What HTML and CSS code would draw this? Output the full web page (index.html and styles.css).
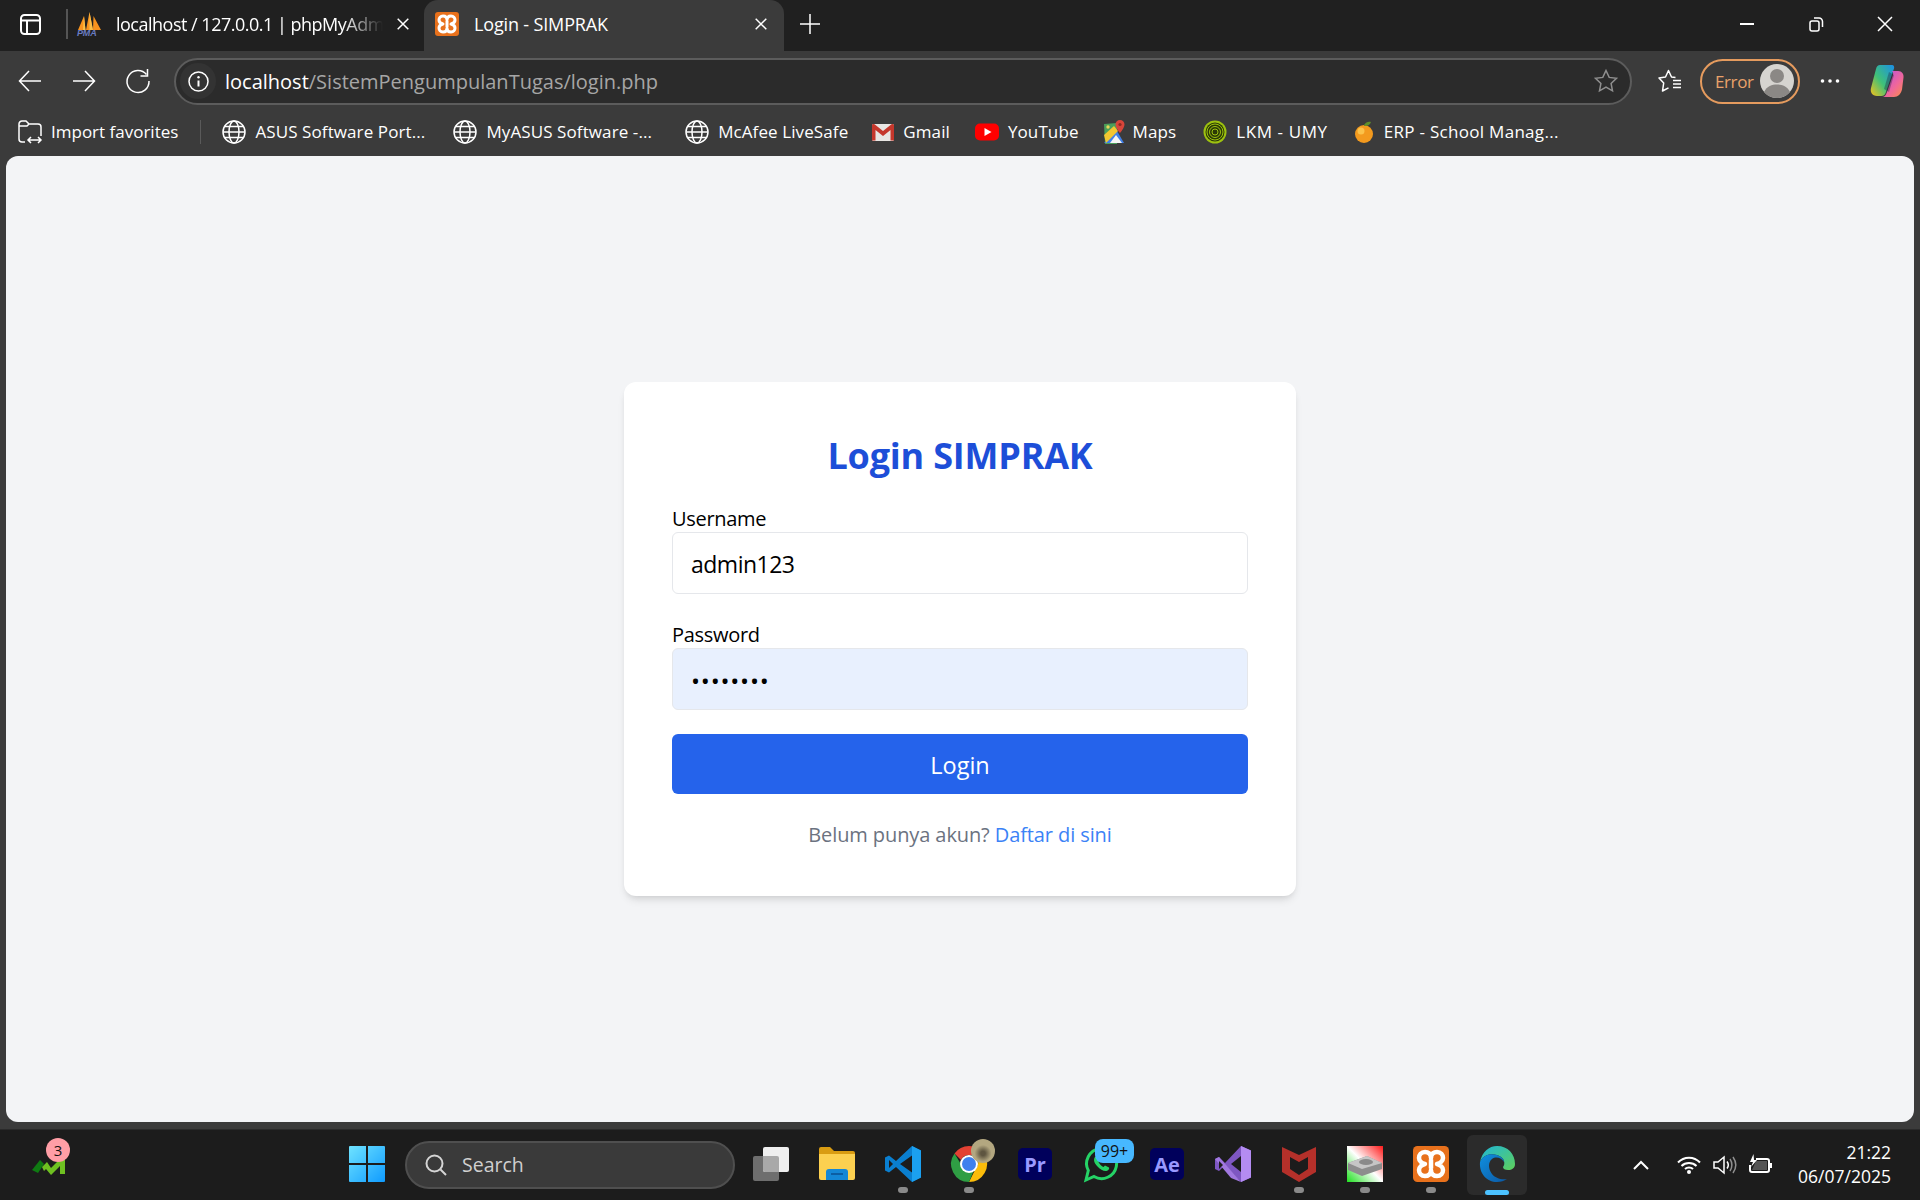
FILE: index.html
```html
<!DOCTYPE html>
<html lang="id">
<head>
<meta charset="utf-8">
<title>Login - SIMPRAK</title>
<link rel="stylesheet" href="styles.css">
</head>
<body>
<svg class="defs" aria-hidden="true">
  <symbol id="globe" viewBox="0 0 24 24"><circle cx="12" cy="12" r="11" class="ln"/><ellipse cx="12" cy="12" rx="5" ry="11" class="ln"/><path d="M1 12h22M2.500 6.500h19M2.500 17.500h19" class="ln"/></symbol>
  <symbol id="xampp" viewBox="0 0 24 24"><rect width="24" height="24" rx="3" fill="#e8711c"/><path d="M12 8C12 5 10 4 8 4 5.500 4 4 6 4 8c0 2 2 3.500 4 4-2 .5-4 2-4 4 0 2 1.500 4 4 4 2 0 4-1 4-4 0 3 2 4 4 4 2.500 0 4-2 4-4 0-2-2-3.500-4-4 2-.5 4-2 4-4 0-2-1.500-4-4-4-2 0-4 1-4 4zM12 9v6" fill="none" stroke="#fff" stroke-width="3" stroke-linejoin="round"/></symbol>
</svg>
<div class="titlebar">
  <svg class="i21 tb-layout" viewBox="0 0 21 21"><rect x="1" y="1" width="19" height="19" rx="3.500" class="ln ln2"/><path d="M1 6.500h19M7 6.500V20" class="ln ln2"/></svg>
  <div class="tab-sep"></div>
  <div class="tab tab-idle">
    <svg class="i24" viewBox="0 0 24 24"><path d="M1 18 7 4l1.500 14zM9 18 12.500 0 16 18zM16 18l.5-14L24 18z" fill="#f7931e"/><path d="M12.500 0 16 18h-3.500zM7 4l1.500 14H6z" fill="#f9c04a"/><text x="0" y="24" class="pma">PMA</text></svg>
    <span class="tab-name fade">localhost / 127.0.0.1 | phpMyAdm</span>
    <svg class="i12" viewBox="0 0 12 12"><path d="M.7.7l10.600 10.600M11.300.7.700 11.300" class="ln"/></svg>
  </div>
  <div class="tab tab-active">
    <svg class="i24" viewBox="0 0 24 24"><use href="#xampp"/></svg>
    <span class="tab-name">Login - SIMPRAK</span>
    <svg class="i12" viewBox="0 0 12 12"><path d="M.7.7l10.600 10.600M11.300.7.700 11.300" class="ln"/></svg>
  </div>
  <svg class="i20 tb-plus" viewBox="0 0 20 20"><path d="M10 0v20M0 10h20" class="ln"/></svg>
  <div class="win-controls">
    <svg class="i16" viewBox="0 0 16 16"><path d="M1 8h14" class="ln ln2"/></svg>
    <svg class="i16" viewBox="0 0 16 16"><rect x="2" y="5" width="9" height="10" rx="2" class="ln"/><path d="M6 2h5a3.500 3.500 0 0 1 3.500 3.500V11" class="ln"/></svg>
    <svg class="i16" viewBox="0 0 16 16"><path d="M1 1l14 14M15 1 1 15" class="ln"/></svg>
  </div>
</div>

<div class="toolbar">
  <svg class="i24 nav" viewBox="0 0 24 24"><path d="M23 12H1.500M11 2 1.500 12 11 22" class="ln"/></svg>
  <svg class="i24 nav" viewBox="0 0 24 24"><path d="M1 12h21.500M13 2l9.500 10L13 22" class="ln"/></svg>
  <svg class="i24 nav" viewBox="0 0 24 24"><path d="M20.500 5.500A11 11 0 1 0 23 12" class="ln"/><path d="M21.500 0v7h-7" class="ln"/></svg>
  <div class="address">
    <span class="info"><svg class="i21" viewBox="0 0 21 21"><circle cx="10.500" cy="10.500" r="9.500" class="ln"/><path d="M10.500 9.500v6" class="ln ln2"/><circle cx="10.500" cy="6.300" r="1.200" fill="#fff"/></svg></span>
    <span class="url"><b class="host">localhost</b>/SistemPengumpulanTugas/login.php</span>
    <svg class="i24 addr-star" viewBox="0 0 24 24"><path d="M12 1.500l3.200 6.900 7.300.9-5.400 5.100 1.400 7.400L12 18.200l-6.500 3.600 1.400-7.400L1.500 9.300l7.300-.9z" class="ln dim"/></svg>
  </div>
  <svg class="i24 fav" viewBox="0 0 24 24"><path d="M17.500 8.500 13.500 8 10.500 1.500 7.500 8 1 9 5.700 14 4.500 22l6-3.200" class="ln" stroke-linejoin="round"/><path d="M15 11.500h8M15 15h8M15 18.500h8" class="ln"/></svg>
  <div class="profile">
    <span class="err">Error</span>
    <svg class="avatar" viewBox="0 0 34 34"><circle cx="17" cy="17" r="17" fill="#d6d4d0"/><circle cx="17" cy="12" r="7" fill="#8b8885"/><path d="M4 28c3-6 8-7.500 13-7.500S27 22 30 28a17 17 0 0 1-26 0z" fill="#8b8885"/></svg>
  </div>
  <svg class="dots" viewBox="0 0 20 4"><circle cx="2.500" cy="2" r="1.800" fill="#fff"/><circle cx="10" cy="2" r="1.800" fill="#fff"/><circle cx="17.500" cy="2" r="1.800" fill="#fff"/></svg>
  <svg class="copilot" viewBox="0 0 34 34">
    <defs>
      <linearGradient id="cpa" x1="0" y1="1" x2="1" y2="0"><stop offset="0" stop-color="#f5c21b"/><stop offset=".45" stop-color="#3fc178"/><stop offset="1" stop-color="#1b8fe8"/></linearGradient>
      <linearGradient id="cpb" x1="0" y1="0" x2="1" y2="1"><stop offset="0" stop-color="#b04fe6"/><stop offset=".6" stop-color="#f0679a"/><stop offset="1" stop-color="#fb8f46"/></linearGradient>
    </defs>
    <path d="M10 1h12c2 0 2.500 2 2 3.500L16 28c-1 3-2.500 4-4.500 4H7C2 32 0 28 1 24L6 5c.6-2.500 2-4 4-4z" fill="url(#cpa)"/>
    <path d="M21 7h7c4 0 6 3 5.500 6.500l-1.500 12C31 30 28 33 24 33H12c2.500 0 4-2 5-5l6-17c.5-2 0-4-2-4z" fill="url(#cpb)"/>
    <path d="M19 8l-5 17 5 3 5-17z" fill="#1d1d3a" opacity=".35"/>
  </svg>
</div>

<div class="bookmarks">
  <div class="bm bm-import">
    <svg class="i24" viewBox="0 0 24 24"><path d="M7 22H4a3 3 0 0 1-3-3V4a3 3 0 0 1 3-3h4l3 3h9a3 3 0 0 1 3 3v9M1 6h8l2-2" class="ln"/><path d="M10 20h13M13 17l-3 3 3 3M20 17l3 3-3 3" class="ln"/></svg>
    <span>Import favorites</span>
  </div>
  <div class="bm-sep"></div>
  <div class="bm bm-asus"><svg class="i24" viewBox="0 0 24 24"><use href="#globe"/></svg><span>ASUS Software Port...</span></div>
  <div class="bm bm-myasus"><svg class="i24" viewBox="0 0 24 24"><use href="#globe"/></svg><span>MyASUS Software -...</span></div>
  <div class="bm bm-mcafee"><svg class="i24" viewBox="0 0 24 24"><use href="#globe"/></svg><span>McAfee LiveSafe</span></div>
  <div class="bm"><svg class="i22" viewBox="0 0 22 22"><rect y="3" width="22" height="17" rx="1.500" fill="#e8e6e3"/><path d="M0 4.500v15h3.500V9l7.500 6 7.500-6v10.500H22v-15C22 3 20 2.500 18.500 4L11 10 3.500 4C2 2.500 0 3 0 4.500z" fill="#c5372c"/></svg><span>Gmail</span></div>
  <div class="bm"><svg class="i24" viewBox="0 0 24 24"><rect y="3.500" width="24" height="17" rx="5" fill="#f00"/><path d="M9.500 8v8l7-4z" fill="#fff"/></svg><span>YouTube</span></div>
  <div class="bm bm-maps"><svg class="i20x24" viewBox="0 0 20 24"><path d="M0 4l13-1v21H1z" fill="#4a9e5b"/><path d="M0 23 13 11l7 12z" fill="#3f7fe8"/><path d="M0 15 10 6l4 5L2 23z" fill="#f3c631"/><path d="M6 23l6-8 6 8z" fill="#f4f4f4"/><path d="M16 0a4.500 4.500 0 0 0-4.500 4.500C11.500 8 16 13 16 13s4.500-5 4.500-8.500A4.500 4.500 0 0 0 16 0z" fill="#d8453a"/><circle cx="16" cy="4.500" r="1.600" fill="#8e2a22"/><circle cx="4" cy="7" r="1.700" fill="#e8d65a"/></svg><span>Maps</span></div>
  <div class="bm bm-lkm"><svg class="i24" viewBox="0 0 24 24"><circle cx="12" cy="12" r="11.500" fill="#9dc10f"/><circle cx="12" cy="12" r="9.500" fill="#2b3a05"/><circle cx="12" cy="12" r="8" fill="none" stroke="#9dc10f" stroke-width="1"/><circle cx="12" cy="12" r="5.500" fill="none" stroke="#9dc10f" stroke-width="1"/><circle cx="12" cy="12" r="3" fill="none" stroke="#9dc10f" stroke-width="1"/></svg><span>LKM - UMY</span></div>
  <div class="bm bm-erp"><svg class="i22" viewBox="0 0 22 22"><circle cx="11" cy="13" r="9" fill="#f39a1e"/><circle cx="8" cy="10" r="3.500" fill="#fbc24a"/><path d="M11 4c2-3 4-3.500 7-3-1 3-3.500 4-7 4z" fill="#5f8f2a"/></svg><span>ERP - School Manag...</span></div>
</div>

<main class="content">
  <form class="card">
    <h1 class="card-title">Login SIMPRAK</h1>
    <div class="field">
      <label class="field-label" for="u">Username</label>
      <input class="field-input" id="u" type="text" value="admin123">
    </div>
    <div class="field">
      <label class="field-label" for="p">Password</label>
      <input class="field-input field-auto" id="p" type="password" value="admin123">
    </div>
    <button class="submit" type="button">Login</button>
    <p class="foot">Belum punya akun? <a class="foot-link" href="#">Daftar di sini</a></p>
  </form>
</main>
<div class="strip"></div>

<div class="taskbar">
  <div class="widget">
    <svg class="widget-ic" viewBox="0 0 34 18"><path d="M0 13 8 3l4 4-6 9z" fill="#0f7a12"/><path d="M10 10l5-5 4 6 8-8h6v14h-5V9l-9 9-5-6-2 2z" fill="#6fc021"/></svg>
    <span class="widget-badge">3</span>
  </div>
  <div class="task-center">
    <div class="slot start"><svg class="i36" viewBox="0 0 36 36"><defs><linearGradient id="wl" x1="0" y1="0" x2="1" y2="1"><stop offset="0" stop-color="#6fe3ff"/><stop offset="1" stop-color="#0f9bff"/></linearGradient></defs><path d="M1 0h16v17H0V1a1 1 0 0 1 1-1zM19 0h16a1 1 0 0 1 1 1v16H19zM0 19h17v17H1a1 1 0 0 1-1-1zM19 19h17v16a1 1 0 0 1-1 1H19z" fill="url(#wl)"/></svg></div>
    <div class="search">
      <svg class="i22" viewBox="0 0 22 22"><circle cx="9.500" cy="9.500" r="8" class="ln ln2 soft"/><path d="M15.500 15.500 21 21" class="ln ln2 soft"/></svg>
      <span>Search</span>
    </div>
    <div class="slot"><svg class="i36" viewBox="0 0 36 36"><rect y="10" width="26" height="25" rx="2" fill="#6e6e6e"/><rect x="10" y="1" width="26" height="25" rx="2" fill="#efefef"/><path d="M10 10h14a2 2 0 0 1 2 2v14H12a2 2 0 0 1-2-2z" fill="#a9a9a9"/></svg></div>
    <div class="slot"><svg class="i36" viewBox="0 0 36 36"><path d="M0 3a2 2 0 0 1 2-2h9l4 4h19a2 2 0 0 1 2 2v4H0z" fill="#d99c12"/><path d="M0 8h36v24a2 2 0 0 1-2 2H2a2 2 0 0 1-2-2z" fill="#fcd050"/><path d="M7 34v-8a3 3 0 0 1 3-3h16a3 3 0 0 1 3 3v8z" fill="#1487d6"/><path d="M12 27h12v2H12z" fill="#0c5ea3"/></svg></div>
    <div class="slot mark"><svg class="i36" viewBox="0 0 36 36"><path d="M27 0 11 15 4 9.500 0 11.500v13L4 26.500 11 21l16 15 9-4.500v-27zM27 9.500 15 18l12 8.500zM4 14v8l4-4z" fill="#0a7fd0" fill-rule="evenodd"/><path d="M27 0l9 4.500v27L27 36z" fill="#1ba0f0"/></svg></div>
    <div class="slot mark"><svg class="i36" viewBox="0 0 36 36"><path d="M18 0a18 18 0 0 1 15.600 9H18a9 9 0 0 0-8 5L3.500 7.500A18 18 0 0 1 18 0z" fill="#e34133"/><path d="M33.600 9A18 18 0 0 1 18 36l6.500-13A9 9 0 0 0 26 12z" fill="#fbbc0a"/><path d="M3.500 7.500 11 20a9 9 0 0 0 12 4l-5 12A18 18 0 0 1 3.500 7.500z" fill="#2f9e44"/><circle cx="18" cy="18" r="9" fill="#fff"/><circle cx="18" cy="18" r="7" fill="#3f80ee"/></svg><span class="chrome-avatar"></span></div>
    <div class="slot"><span class="adobe">Pr</span></div>
    <div class="slot"><svg class="i36" viewBox="0 0 36 36"><path d="M3 34l2.300-9.500A15 15 0 1 1 11 30.500z" fill="none" stroke="#25d366" stroke-width="3"/><path d="M12 11c-1.500 2-1.500 5 2 9s7 5.500 9.500 5 3-3 2.500-3.500l-4-2-1.500 1.500c-2-.5-4-3-5-5l1.500-1.500-1.500-4c-1-.5-2.500 0-3.500.5z" fill="#25d366"/></svg><span class="wa-badge">99+</span></div>
    <div class="slot"><span class="adobe">Ae</span></div>
    <div class="slot"><svg class="i36" viewBox="0 0 36 36"><path d="M26 0l10 4.500v27L26 36 10 19l-6 6-4-2V13l4-2 6 6z" fill="#7e57c2"/><path d="M26 0l10 4.500v27L26 36z" fill="#b48cf2"/><path d="M0 13l4-2 22 25-10-4z" fill="#a178e0"/><path d="M4 15v8l4-4z" fill="#1c1c1c"/><path d="M26 10 16 18l10 8z" fill="#1c1c1c"/></svg></div>
    <div class="slot mark"><svg class="i36" viewBox="0 0 36 36"><path d="M1 1l17 8 17-8v25L18 36 1 26z" fill="#b5302a"/><path d="M9 11l9 5 9-5v12l-9 6-9-6z" fill="#1c1c1c"/></svg></div>
    <div class="slot mark"><svg class="i36" viewBox="0 0 36 36"><defs><linearGradient id="dg" x1="0" y1="1" x2="1" y2="0"><stop offset="0" stop-color="#1fe01f"/><stop offset=".5" stop-color="#fff"/><stop offset="1" stop-color="#ff1a1a"/></linearGradient></defs><rect width="36" height="36" fill="url(#dg)"/><path d="M1 17 20 10l15 7v6L15 30 1 24z" fill="#8d8d8d"/><path d="M1 17 20 10l15 7-20 6z" fill="#c6c6c6"/><ellipse cx="19" cy="16" rx="7" ry="3" fill="#8a8a8a"/></svg></div>
    <div class="slot mark"><svg class="i36" viewBox="0 0 24 24"><use href="#xampp"/></svg></div>
    <div class="slot slot-edge"><svg class="i36" viewBox="0 0 36 36"><defs><linearGradient id="eg" x1="0" y1="0" x2="1" y2="1"><stop offset="0" stop-color="#1fb6d8"/><stop offset="1" stop-color="#5fd05a"/></linearGradient><linearGradient id="eb" x1="0" y1="0" x2="1" y2="1"><stop offset="0" stop-color="#0f8fdf"/><stop offset="1" stop-color="#0c59a4"/></linearGradient></defs><path d="M18 0C29 0 36 8 36 18c0 4-3 6-7 6-3 0-5-1-5-3 2-2 3-9-6-12-7-2-14 0-17 7C3 6 10 0 18 0z" fill="url(#eg)"/><path d="M1 16c3-7 10-9 17-7 5 1.500 7 4.500 7 7-2-4-8-6-12-3-4 3-4 10 0 15 3 4 9 6 15 5-3 2-6 3-10 3C8 36 0 28 1 16z" fill="url(#eb)"/></svg></div>
  </div>
  <div class="tray">
    <svg class="tray-chev" viewBox="0 0 16 10"><path d="M1 9l7-7 7 7" class="ln ln2"/></svg>
    <svg class="tray-wifi" viewBox="0 0 24 18"><path d="M1 6.500c6-6.500 16-6.500 22 0M4.500 10c4-4 11-4 15 0M8 13c2.200-2 5.800-2 8 0" class="ln ln2"/><circle cx="12" cy="16" r="2" fill="#fff"/></svg>
    <svg class="tray-vol" viewBox="0 0 24 18"><path d="M1 6h4l6-5v16l-6-5H1z" class="ln"/><path d="M14 5.500c1.500 2 1.500 5 0 7" class="ln"/><path d="M17 3c2.500 3.500 2.500 8.500 0 12M20 1c3.500 5 3.500 11 0 16" class="ln dim"/></svg>
    <svg class="tray-bat" viewBox="0 0 24 18"><path d="M7 3h11a2 2 0 0 1 2 2v9a2 2 0 0 1-2 2H3a2 2 0 0 1-2-2V9" class="ln ln2"/><path d="M21 7h2v5h-2z" fill="#fff"/><path d="M7 5h11v9H3z" fill="#fff" opacity=".25"/><path d="M4.500-2 1 6h3l-2 5 6-7H5z" fill="#fff"/></svg>
    <div class="clock"><span>21:22</span><span>06/07/2025</span></div>
  </div>
</div>
</body>
</html>
```
FILE: styles.css
```css
* { box-sizing: border-box; }
html, body { margin: 0; height: 100%; }
body {
  height: 1200px;
  overflow: hidden;
  display: flex;
  flex-direction: column;
  background: #3b3b3b;
  color: #fff;
  font-family: "Open Sans", "Noto Sans", sans-serif;
}
svg { display: block; flex: none; overflow: visible; }
.defs { width: 0; height: 0; position: absolute; }
.ln { fill: none; stroke: #fff; stroke-width: 1.5; }
.ln2 { stroke-width: 2; }
.dim { stroke: #8f8f8f; }
.soft { stroke: #d5d5d5; }
.i12 { width: 12px; height: 12px; }
.i16 { width: 16px; height: 16px; }
.i20 { width: 20px; height: 20px; }
.i21 { width: 21px; height: 21px; }
.i22 { width: 22px; height: 22px; }
.i24 { width: 24px; height: 24px; }
.i36 { width: 36px; height: 36px; }
.i20x24 { width: 20px; height: 24px; }

.titlebar {
  height: 51px;
  flex: none;
  display: flex;
  align-items: center;
  background: #202020;
  font-size: 18px;
  letter-spacing: -.15px;
}
.tb-layout { margin: 0 0 3px 20px; }
.tab-sep { width: 2px; height: 30px; background: #555; margin: 0 9px 3px 25px; }
.tab { height: 51px; display: flex; align-items: center; padding-bottom: 3px; }
.tab-idle { width: 347px; }
.tab-active {
  width: 360px;
  padding-left: 11px;
  background: #3b3b3b;
  border-radius: 14px 14px 0 0;
}
.tab-name { white-space: nowrap; margin-left: 15px; }
.tab-active .tab-name { width: 281px; }
.tab-idle .tab-name { width: 267px; margin-right: 14px; letter-spacing: -.5px; }
.fade { mask-image: linear-gradient(90deg, #000 85%, transparent 100%); }
.pma { font: italic bold 9px "Liberation Sans", sans-serif; fill: #6a7cc0; }
.tb-plus { margin: 0 0 3px 16px; }
.win-controls { margin-left: auto; display: flex; gap: 53px; padding: 0 27px 3px 0; }

.toolbar {
  height: 60px;
  flex: none;
  display: flex;
  align-items: center;
  padding-left: 18px;
  background: #3b3b3b;
}
.nav { margin-right: 30px; }
.address {
  width: 1458px;
  height: 47px;
  margin-left: -6px;
  display: flex;
  align-items: center;
  padding-left: 4px;
  padding-right: 12px;
  border: 2px solid #5c5c5c;
  border-radius: 24px;
  background: #2b2b2b;
  font-size: 20px;
}
.info {
  width: 36px;
  height: 36px;
  display: flex;
  align-items: center;
  justify-content: center;
  border-radius: 50%;
  background: #333;
}
.url { margin-left: 9px; color: #a6a6a6; white-space: nowrap; }
.host { color: #fff; font-weight: 400; }
.addr-star { margin-left: auto; }
.fav { margin-left: 26px; }
.profile {
  width: 100px;
  height: 45px;
  margin-left: 18px;
  padding: 0 4px 0 13px;
  display: flex;
  align-items: center;
  justify-content: space-between;
  border: 2px solid #e59b5e;
  border-radius: 23px;
  color: #e9a26a;
  font-size: 17px;
  letter-spacing: -.4px;
}
.avatar { width: 34px; height: 34px; }
.dots { width: 20px; height: 4px; margin-left: 20px; }
.copilot { width: 34px; height: 34px; margin-left: 30px; }

.bookmarks {
  height: 45px;
  flex: none;
  display: flex;
  align-items: center;
  gap: 25px;
  padding: 0 0 4px 18px;
  background: #3b3b3b;
  font-size: 17px;
  letter-spacing: .1px;
}
.bm { display: flex; align-items: center; gap: 9px; white-space: nowrap; }
.bm-import { letter-spacing: 0; }
.bm-sep { width: 1px; height: 24px; background: #5a5a5a; margin: 0 -4px 0 -3px; }
.bm-asus { margin-right: 3px; }
.bm-myasus { margin-right: 8px; }
.bm-mcafee { margin-right: -1px; }
.bm-maps { margin-right: 2px; }
.bm-lkm { letter-spacing: .6px; }
.bm-erp { letter-spacing: .3px; }

.content {
  flex: 1;
  margin: 0 6px;
  display: flex;
  align-items: center;
  justify-content: center;
  background: #f3f4f6;
  border-radius: 12px;
}
.strip { height: 8px; flex: none; background: #3b3b3b; border-bottom: 1px solid #2a2a2a; }

.card {
  width: 672px;
  padding: 48px;
  background: #fff;
  border-radius: 12px;
  box-shadow: 0 6px 9px -2px rgba(0,0,0,.1), 0 3px 6px -3px rgba(0,0,0,.1);
  color: #000;
}
.card-title {
  margin: 0 0 24px;
  padding-top: 4px;
  font-size: 36px;
  line-height: 44px;
  font-weight: 700;
  letter-spacing: -.2px;
  text-align: center;
  color: #1d4ed8;
}
.field { margin-bottom: 24px; }
.field-label { display: block; padding-top: 3px; font-size: 20px; line-height: 27px; letter-spacing: -.3px; }
.field-input {
  display: block;
  width: 100%;
  height: 62px;
  padding: 2px 18px 0;
  border: 1.5px solid #e5e7eb;
  border-radius: 6px;
  background: #fff;
  color: #000;
  font: inherit;
  font-size: 23px;
  letter-spacing: -.5px;
  outline: none;
}
.field-auto { background: #e8f0fe; font-size: 24px; letter-spacing: .8px; }
.submit {
  display: block;
  width: 100%;
  height: 60px;
  padding: 2px 0 0;
  border: 0;
  border-radius: 6px;
  background: #2563eb;
  color: #fff;
  font: inherit;
  font-size: 23.500px;
}
.foot {
  margin: 24px 0 0;
  padding-top: 4px;
  font-size: 20px;
  line-height: 26px;
  letter-spacing: -.1px;
  text-align: center;
  color: #6b7280;
}
.foot-link { color: #3b82f6; text-decoration: none; }

.taskbar {
  height: 70px;
  flex: none;
  position: relative;
  display: flex;
  align-items: center;
  background: #1c1c1c;
}
.widget { position: absolute; left: 32px; top: 27px; }
.widget-ic { width: 34px; height: 18px; }
.widget-badge {
  position: absolute;
  left: 14px;
  top: -19px;
  width: 24px;
  height: 24px;
  border-radius: 50%;
  background: #ff9ea6;
  color: #111;
  font-size: 15px;
  line-height: 24px;
  text-align: center;
}
.task-center { display: flex; align-items: center; margin-left: 334px; }
.slot {
  position: relative;
  width: 66px;
  height: 60px;
  display: flex;
  align-items: center;
  justify-content: center;
}
.slot svg { margin-top: -2px; }
.mark::after {
  content: "";
  position: absolute;
  left: 28px;
  bottom: 2px;
  width: 10px;
  height: 6px;
  border-radius: 3px;
  background: #8a8a8a;
}
.start { margin-right: 5px; }
.search {
  width: 330px;
  height: 48px;
  display: flex;
  align-items: center;
  gap: 15px;
  padding: 0 0 1px 18px;
  border: 2px solid #4f4f4f;
  border-radius: 24px;
  background: #3a3a3a;
  color: #d0d0d0;
  font-size: 19.500px;
}
.search + .slot { margin-left: 3px; }
.adobe {
  width: 34px;
  height: 32px;
  margin-top: -2px;
  display: flex;
  align-items: center;
  justify-content: center;
  border-radius: 5px;
  background: #00005b;
  color: #9999ff;
  font-size: 20px;
  font-weight: 700;
}
.chrome-avatar {
  position: absolute;
  left: 35px;
  top: 4px;
  width: 24px;
  height: 24px;
  border-radius: 50%;
  background: radial-gradient(circle at 50% 60%, #5e5540 12%, #b3a780 45%);
}
.wa-badge {
  position: absolute;
  left: 27px;
  top: 4px;
  width: 39px;
  height: 24px;
  border-radius: 8px;
  background: #47b8ff;
  color: #111;
  font-size: 16px;
  line-height: 24px;
  text-align: center;
}
.slot-edge { width: 60px; margin-left: 3px; border-radius: 6px; background: #2b2b2b; }
.slot-edge::after { content: ""; position: absolute; left: 18px; bottom: 0; width: 24px; height: 5px; border-radius: 3px; background: #4cc2ff; }
.tray { position: absolute; left: 1633px; top: 0; width: 258px; height: 70px; display: flex; align-items: center; }
.tray-chev { width: 16px; height: 10px; }
.tray-wifi, .tray-vol, .tray-bat { width: 24px; height: 18px; }
.tray-wifi { margin-left: 28px; }
.tray-vol, .tray-bat { margin-left: 12px; }
.clock { margin-left: auto; padding-bottom: 2px; display: flex; flex-direction: column; align-items: flex-end; font-size: 17.500px; line-height: 24px; }
```
